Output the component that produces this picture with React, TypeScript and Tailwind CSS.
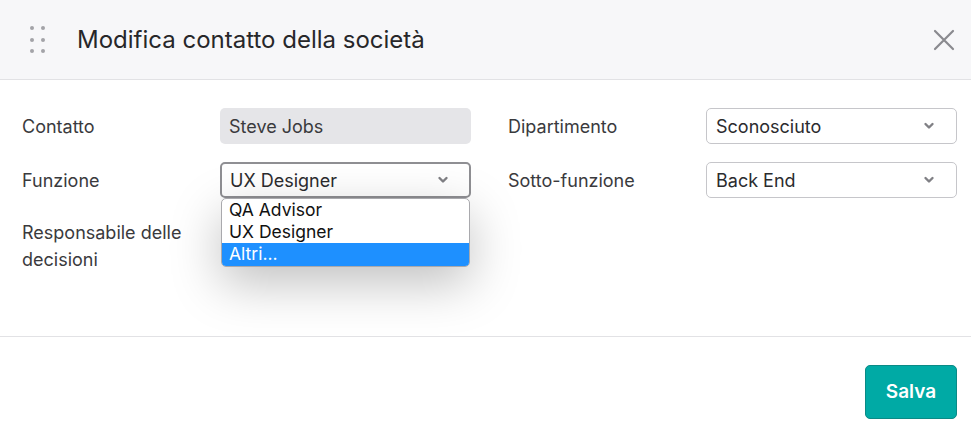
import React from "react";

function Chevron() {
  return (
    <svg width="12" height="8" viewBox="0 0 12 8" className="shrink-0">
      <path d="M2.5 2 L6 5.5 L9.5 2" fill="none" stroke="#808085" strokeWidth="2.4" strokeLinecap="round" strokeLinejoin="round" />
    </svg>
  );
}

function DragDots() {
  return (
    <div className="grid grid-cols-2 gap-x-[7px] gap-y-[7.5px] w-[15px]">
      {[0, 1, 2, 3, 4, 5].map((i) => (
        <span key={i} className="block w-[4px] h-[4px] rounded-full bg-[#a3a3a8]" />
      ))}
    </div>
  );
}

function Select({ value, focused }: { value: string; focused?: boolean }) {
  return (
    <div
      className={
        focused
          ? "h-[36px] w-full rounded-[5px] border-2 border-[#8f8f93] bg-white flex items-center justify-between pl-[8px] pr-[20px] text-[18px] text-[#2b2b2e]"
          : "h-[36px] w-full rounded-[5px] border border-[#c6c6ca] bg-white flex items-center justify-between pl-[9px] pr-[21px] text-[18px] text-[#2b2b2e]"
      }
    >
      <span>{value}</span>
      <Chevron />
    </div>
  );
}

export default function App() {
  return (
    <div className="w-[971px] h-[434px] bg-white flex flex-col overflow-hidden" style={{ fontFamily: "Inter, 'Noto Sans', sans-serif" }}>
      <div className="h-[80px] bg-[#f7f7f9] border-b border-[#e2e2e5] flex items-center pl-[30px] pr-[16px] shrink-0">
        <DragDots />
        <h1 className="ml-[32px] text-[24px] text-[#27272a] font-normal">Modifica contatto della società</h1>
        <div className="ml-auto">
          <svg width="22" height="22" viewBox="0 0 22 22">
            <path d="M2 2 L20 20 M20 2 L2 20" stroke="#8a8a8f" strokeWidth="2.2" strokeLinecap="round" />
          </svg>
        </div>
      </div>

      <div className="h-[257px] border-b border-[#e2e2e5] pt-[28px] pl-[22px] pr-[14px] shrink-0">
        <div className="grid grid-cols-2 gap-x-[37px] gap-y-[18px] text-[18px] text-[#3a3a3d]">
          <div className="flex items-center">
            <span className="w-[198px] shrink-0">Contatto</span>
            <div className="h-[36px] flex-1 rounded-[5px] bg-[#e5e5e8] flex items-center pl-[9px] text-[#3a3a3d]">Steve Jobs</div>
          </div>
          <div className="flex items-center">
            <span className="w-[198px] shrink-0">Dipartimento</span>
            <div className="flex-1"><Select value="Sconosciuto" /></div>
          </div>
          <div className="flex items-center">
            <span className="w-[198px] shrink-0">Funzione</span>
            <div className="flex-1 relative">
              <Select value="UX Designer" focused />
              <div className="absolute left-[1px] right-[1px] top-[36px] z-10 rounded-[5px] border border-[#a9a9ad] bg-white overflow-hidden shadow-[0_16px_50px_rgba(0,0,0,0.25)] text-[17.5px] text-[#111] leading-[22px]">
                <div className="pl-[7px] h-[22px]">QA Advisor</div>
                <div className="pl-[7px] h-[22px]">UX Designer</div>
                <div className="pl-[7px] h-[23px] bg-[#1e90ff] text-white">Altri...</div>
              </div>
            </div>
          </div>
          <div className="flex items-center">
            <span className="w-[198px] shrink-0">Sotto-funzione</span>
            <div className="flex-1"><Select value="Back End" /></div>
          </div>
          <div className="flex items-start mt-[3px]">
            <span className="w-[180px] shrink-0 leading-[27px]">Responsabile delle decisioni</span>
          </div>
        </div>
      </div>

      <div className="flex justify-end pr-[14px] pt-[28px]">
        <button className="w-[92px] h-[54px] rounded-[5px] bg-[#00aaa5] border border-[#0a8a86] text-white text-[19px] font-semibold">Salva</button>
      </div>
    </div>
  );
}
